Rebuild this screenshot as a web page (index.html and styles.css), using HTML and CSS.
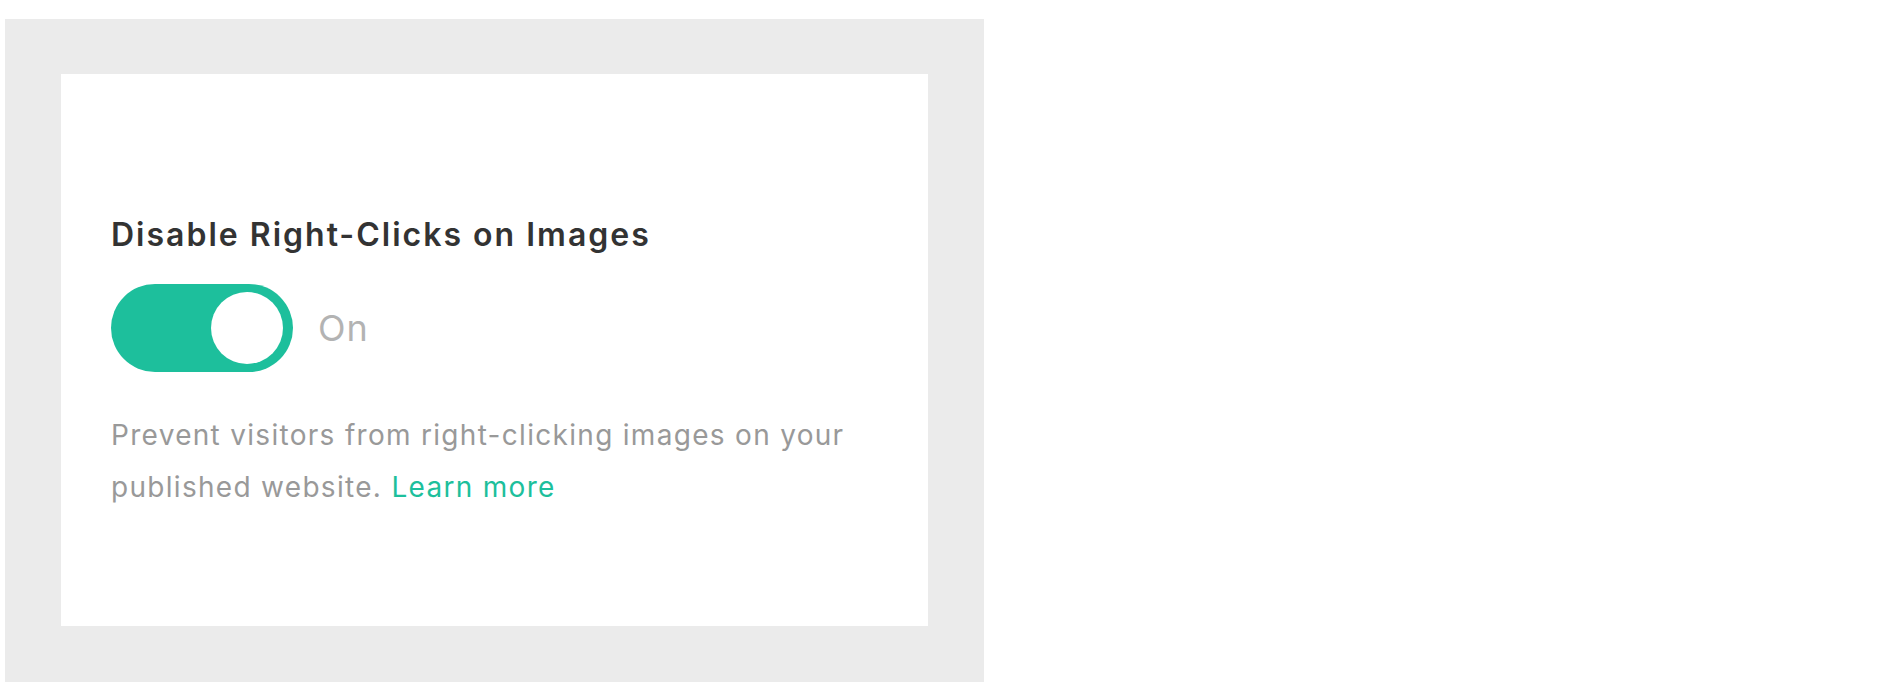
FILE: index.html
```html
<!DOCTYPE html>
<html lang="en">
<head>
<meta charset="utf-8">
<title>Disable Right-Clicks on Images</title>
<link rel="stylesheet" href="styles.css">
</head>
<body>
  <div class="panel">
    <div class="card">
      <h2 class="title">Disable Right-Clicks on Images</h2>
      <div class="toggle-row">
        <span class="toggle" role="switch" aria-checked="true"><span class="knob"></span></span>
        <span class="state">On</span>
      </div>
      <p class="desc">Prevent visitors from right-clicking images on your published website. <a class="link" href="#">Learn more</a></p>
    </div>
  </div>
</body>
</html>
```

FILE: styles.css
```css
html, body {
  margin: 0;
  padding: 0;
  background: #ffffff;
}

body {
  font-family: "Inter", "Open Sans", sans-serif;
  padding: 19px 0 0 5px;
}

.panel {
  width: 979px;
  height: 663px;
  box-sizing: border-box;
  background: #ebebeb;
  padding: 55px 56px 56px 56px;
}

.card {
  height: 552px;
  box-sizing: border-box;
  background: #ffffff;
  padding: 145px 40px 0 50px;
}

.title {
  margin: 0;
  font-size: 32px;
  line-height: 32px;
  font-weight: 600;
  letter-spacing: 2px;
  color: #333333;
}

.toggle-row {
  display: flex;
  align-items: center;
  margin-top: 33px;
}

.toggle {
  width: 182px;
  height: 88px;
  box-sizing: border-box;
  border-radius: 44px;
  background: #1dbf9c;
  display: flex;
  align-items: center;
  justify-content: flex-end;
  padding-right: 10px;
}

.knob {
  width: 72px;
  height: 72px;
  border-radius: 50%;
  background: #ffffff;
}

.state {
  margin-left: 25px;
  font-size: 36px;
  letter-spacing: 1px;
  color: #b3b3b3;
}

.desc {
  margin: 37px 0 0 0;
  max-width: 780px;
  font-size: 28px;
  line-height: 52px;
  letter-spacing: 1.3px;
  color: #999999;
}

.link {
  color: #1dbf9c;
  text-decoration: none;
}
```
